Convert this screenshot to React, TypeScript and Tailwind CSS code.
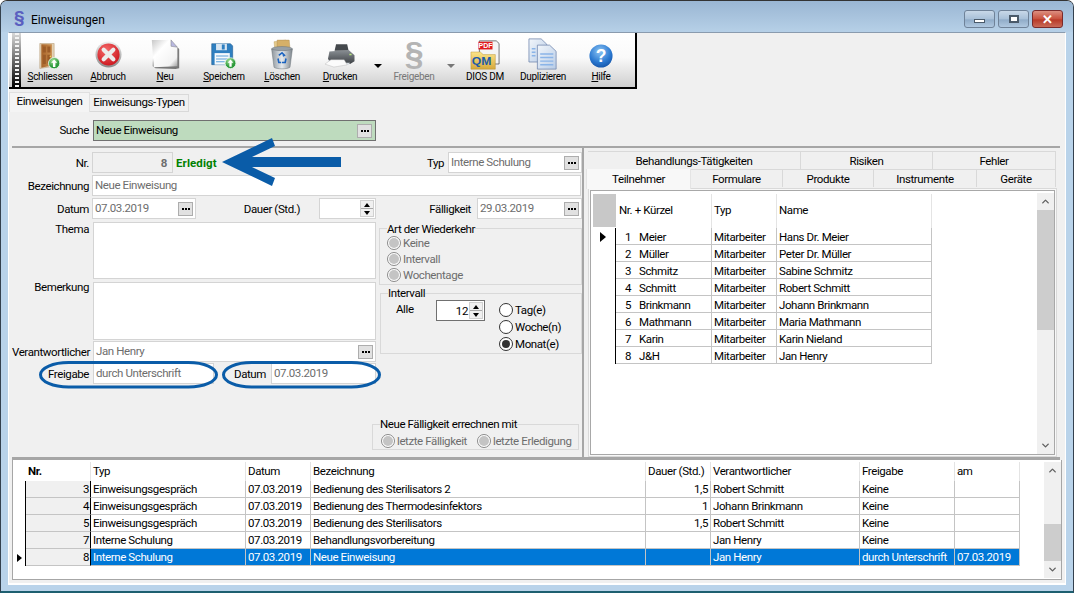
import React from "react";
import { ChevronUp, ChevronDown } from "lucide-react";

const Dots = () => (
  <span className="flex h-[14px] w-[15px] shrink-0 items-center justify-center gap-[1px] border border-[#adadad] bg-[#e1e1e1]">
    <i className="block h-[2px] w-[2px] bg-black" />
    <i className="block h-[2px] w-[2px] bg-black" />
    <i className="block h-[2px] w-[2px] bg-black" />
  </span>
);

const Field = ({ w, text, dots }: { w: string; text?: string; dots?: boolean }) => (
  <div className={`flex h-[21px] shrink-0 items-center justify-between border border-[#d4d4d4] bg-white pl-[2px] pr-[2px] text-[#6d6d6d] ${w}`}>
    <span className="whitespace-nowrap pb-[1px]">{text}</span>
    {dots && <Dots />}
  </div>
);

const Label = ({ children, w = "w-[78px]" }: { children: React.ReactNode; w?: string }) => (
  <span className={`shrink-0 whitespace-nowrap pr-[1px] text-right ${w}`}>{children}</span>
);

const Radio = ({ state = "off", label, w }: { state?: "off" | "on" | "dis"; label: string; w?: string }) => (
  <div className={`flex h-[16px] items-center gap-[2px] whitespace-nowrap ${w ?? ""}`}>
    {state === "dis" ? (
      <span className="flex h-[14px] w-[14px] shrink-0 items-center justify-center rounded-full border border-[#8a8a8a] bg-white">
        <i className="block h-[10px] w-[10px] rounded-full bg-[#c4c4c4]" />
      </span>
    ) : (
      <span className="flex h-[14px] w-[14px] shrink-0 items-center justify-center rounded-full border border-[#333] bg-white">
        {state === "on" && <i className="block h-[8px] w-[8px] rounded-full bg-[#333]" />}
      </span>
    )}
    <span className={state === "dis" ? "text-[#6d6d6d]" : "text-black"}>{label}</span>
  </div>
);

const Spin = () => (
  <span className="flex h-[17px] w-[14px] shrink-0 flex-col border border-[#d0d0d0] bg-[#f0f0f0]">
    <span className="flex flex-1 items-center justify-center border-b border-[#a8a8a8]">
      <i className="block h-0 w-0 border-x-[3px] border-b-[4px] border-x-transparent border-b-black" />
    </span>
    <span className="flex flex-1 items-center justify-center">
      <i className="block h-0 w-0 border-x-[3px] border-t-[4px] border-x-transparent border-t-black" />
    </span>
  </span>
);

const Scrollbar = ({ top, thumb, rest, h }: { top: string; thumb: string; rest: string; h: string }) => (
  <div className={`flex w-[17px] shrink-0 flex-col items-stretch bg-[#f0f0f0] ${h}`}>
    <span className="flex h-[17px] items-center justify-center">
      <ChevronUp size={11} strokeWidth={3} color="#606060" />
    </span>
    <span className={top} />
    <span className={`bg-[#cdcdcd] ${thumb}`} />
    <span className={rest} />
    <span className="flex h-[17px] items-center justify-center">
      <ChevronDown size={11} strokeWidth={3} color="#606060" />
    </span>
  </div>
);

const DoorIcon = () => (
  <svg width="22" height="28" viewBox="6 1 29 37">
    <defs>
      <linearGradient id="door" x1="0" x2="1"><stop offset="0" stopColor="#a8642a" /><stop offset="1" stopColor="#c98d4e" /></linearGradient>
      <radialGradient id="grn" cx=".4" cy=".3"><stop offset="0" stopColor="#a8e49a" /><stop offset="1" stopColor="#2d9a3c" /></radialGradient>
    </defs>
    <path d="M7 3h19v30l-19 3z" fill="#e3d2b5" stroke="#a88a60" strokeWidth=".6" />
    <path d="M9 4h14v28l-14 3z" fill="url(#door)" />
    <path d="M11 7h4v8h-4zM17 7h4v8h-4zM11 18h4v12h-4zM17 18h4v11h-4z" fill="#9c5c28" />
    <circle cx="21" cy="20" r="1" fill="#f0d050" />
    <circle cx="26" cy="29" r="7.5" fill="url(#grn)" stroke="#e8f5e8" strokeWidth="1.2" />
    <path d="M26 24l4 4.5h-2.4V34h-3.2v-5.5H22z" fill="#fff" />
  </svg>
);
const AbortIcon = () => (
  <svg className="mb-[2px]" width="27" height="27" viewBox="0 0 28 28">
    <defs>
      <radialGradient id="red" cx=".4" cy=".3" r=".8"><stop offset="0" stopColor="#f56a6a" /><stop offset="1" stopColor="#c80f18" /></radialGradient>
      <linearGradient id="ring" x1="0" y1="0" x2="0" y2="1"><stop offset="0" stopColor="#f0f0f0" /><stop offset="1" stopColor="#8a8a8a" /></linearGradient>
    </defs>
    <circle cx="14" cy="14" r="13.5" fill="url(#ring)" />
    <circle cx="14" cy="14" r="11.5" fill="url(#red)" />
    <path d="M9 9l10 10M19 9L9 19" stroke="#ececec" strokeWidth="4.4" strokeLinecap="round" />
  </svg>
);
const PaperIcon = () => (
  <svg width="31" height="31" viewBox="0 0 32 34">
    <defs><linearGradient id="pap" x1="0" y1="0" x2="1" y2="1"><stop offset="0" stopColor="#c8c8c8" /><stop offset=".35" stopColor="#fff" /><stop offset=".8" stopColor="#f2f2f2" /><stop offset="1" stopColor="#999" /></linearGradient></defs>
    <path d="M3 2h19l9 9v21l-4 1-22-1-3-2z" fill="#444" opacity=".7" />
    <path d="M1 1h21l7 8v21l-26 1z" fill="url(#pap)" />
    <path d="M22 1l7 8-7-1z" fill="#b8b8e0" stroke="#777" strokeWidth=".5" />
  </svg>
);
const FloppyIcon = () => (
  <svg className="mb-[1px]" width="26" height="26" viewBox="0 0 36 36">
    <defs><radialGradient id="grn2" cx=".4" cy=".3"><stop offset="0" stopColor="#a8e49a" /><stop offset="1" stopColor="#2d9a3c" /></radialGradient></defs>
    <path d="M1 1h26l3 3v26H1z" fill="#2f7fc0" stroke="#1d5a90" strokeWidth=".8" />
    <rect x="7" y="1" width="15" height="9" fill="#d8e6f2" />
    <rect x="15" y="2" width="4" height="7" fill="#2f7fc0" />
    <rect x="5" y="14" width="21" height="16" fill="#f6f9fc" />
    <path d="M7 18h17M7 22h17M7 26h12" stroke="#5aa0d8" strokeWidth="1.4" />
    <circle cx="27" cy="28" r="7.5" fill="url(#grn2)" stroke="#e8f5e8" strokeWidth="1.2" />
    <path d="M27 23l4 4.5h-2.4V33h-3.2v-5.5H23z" fill="#fff" />
  </svg>
);
const BinIcon = () => (
  <svg width="24" height="31" viewBox="0 0 30 38">
    <defs><linearGradient id="bin" x1="0" x2="1"><stop offset="0" stopColor="#8d959c" /><stop offset=".5" stopColor="#e6eaee" /><stop offset="1" stopColor="#7d858c" /></linearGradient></defs>
    <path d="M5 3l15-2 3 11H6z" fill="#e4c98a" stroke="#b59a5a" strokeWidth=".5" />
    <path d="M9 1h15l1 11H9z" fill="#d6b068" stroke="#a8864a" strokeWidth=".5" />
    <ellipse cx="15" cy="12" rx="13" ry="3" fill="#98a0a6" stroke="#6a7278" strokeWidth=".6" />
    <path d="M2 12l3 23c3 2.500 17 2.500 20 0l3-23c-5 3-21 3-26 0z" fill="url(#bin)" stroke="#6a7278" strokeWidth=".6" />
    <path d="M11 20l4-3 3 3-2 1M20 24l-1 5-4 0M10 24l1 5h3" fill="none" stroke="#1b63c0" strokeWidth="2" />
  </svg>
);
const PrinterIcon = () => (
  <svg className="mb-[1px]" width="31" height="26" viewBox="0 0 42 34">
    <defs><linearGradient id="pr" x1="0" y1="0" x2="0" y2="1"><stop offset="0" stopColor="#8a8f94" /><stop offset="1" stopColor="#3c4044" /></linearGradient></defs>
    <path d="M15 1h15l2 9H13z" fill="#44484c" />
    <path d="M6 11l26-2 8 7v8l-6 4-24 0-6-7z" fill="url(#pr)" />
    <path d="M4 22l6 4h24l-2 3H6z" fill="#d8dde2" />
    <path d="M0 28l8-6h18l4 7-18 3z" fill="#fbfbfb" stroke="#aaa" strokeWidth=".5" />
    <rect x="33" y="14" width="3" height="2" fill="#b4e47a" />
  </svg>
);
const QmIcon = () => (
  <svg width="30" height="30" viewBox="0 0 32 35" preserveAspectRatio="none">
    <defs><linearGradient id="fold" x1="0" y1="0" x2="0" y2="1"><stop offset="0" stopColor="#fbe48a" /><stop offset="1" stopColor="#d6a93c" /></linearGradient></defs>
    <path d="M10 1h18l3 3v24H10z" fill="#f4f4f4" stroke="#444" strokeWidth=".8" />
    <rect x="9" y="2" width="15" height="9" fill="#e01c1c" />
    <text x="16.500" y="9.500" textAnchor="middle" fontSize="7.500" fontWeight="700" letterSpacing="0" fill="#fff" fontFamily="Liberation Sans">PDF</text>
    <path d="M1 14h10l3 3h13v17H1z" fill="url(#fold)" stroke="#b48c30" strokeWidth=".5" />
    <text x="2" y="29" fontSize="13" fontWeight="700" letterSpacing="0" fill="#1c5aa8" fontFamily="Liberation Sans">QM</text>
  </svg>
);
const DupIcon = () => (
  <svg width="30" height="32" viewBox="0 0 32 36" preserveAspectRatio="none">
    <defs><linearGradient id="doc" x1="0" y1="0" x2="1" y2="1"><stop offset="0" stopColor="#f2f6fb" /><stop offset="1" stopColor="#b8cce6" /></linearGradient></defs>
    <path d="M1 1h13l6 6v20H1z" fill="url(#doc)" stroke="#6a80a8" strokeWidth=".8" />
    <path d="M10 8h13l7 7v20H10z" fill="url(#doc)" stroke="#6a80a8" strokeWidth=".8" />
    <path d="M13 18h14M13 22h14M13 26h14M13 30h14" stroke="#8ab4e8" strokeWidth="1.6" />
    <path d="M4 12h4M4 16h4M4 20h4" stroke="#8ab4e8" strokeWidth="1.6" />
  </svg>
);
const HelpIcon = () => (
  <svg className="mb-[2px]" width="24" height="24" viewBox="0 0 26 26">
    <defs><radialGradient id="hlp" cx=".45" cy=".3" r=".8"><stop offset="0" stopColor="#8cc4f4" /><stop offset=".6" stopColor="#2a78d0" /><stop offset="1" stopColor="#0f4a9c" /></radialGradient></defs>
    <circle cx="13" cy="13" r="12.500" fill="url(#hlp)" />
    <text x="13" y="20" textAnchor="middle" fontSize="19" fontWeight="700" letterSpacing="0" fill="#fff" fontFamily="Liberation Sans">?</text>
  </svg>
);

const Tool = ({ w, icon, label, dim }: { w: string; icon: React.ReactNode; label: React.ReactNode; dim?: boolean }) => (
  <div className={`flex h-[54px] shrink-0 flex-col items-center ${w}`}>
    <div className="flex h-[37px] items-end justify-center">{icon}</div>
    <span className={`whitespace-nowrap text-[10px] leading-[13px] tracking-[-0.3px] ${dim ? "text-[#777]" : "text-black"}`}>{label}</span>
  </div>
);

const Caret = ({ dim }: { dim?: boolean }) => (
  <div className="flex h-[54px] w-[13px] shrink-0 items-center justify-center pt-[11px]">
    <i className={`block h-0 w-0 border-x-[4px] border-t-[4px] border-x-transparent ${dim ? "border-t-[#777]" : "border-t-black"}`} />
  </div>
);

const WinBtn = ({ red, children }: { red?: boolean; children: React.ReactNode }) => (
  <div className={`flex h-[18px] w-[31px] items-center justify-center rounded-[3px] border ${red ? "border-[#7a2a2a] bg-[linear-gradient(#dc8f80,#c8503c_50%,#b83a28_55%,#c86a58)]" : "border-[#6f8298] bg-[linear-gradient(#c8d8e8,#a8c0d8_50%,#90acc8_55%,#b0c8e0)]"}`}>
    {children}
  </div>
);

const teil = [
  ["1", "Meier", "Hans Dr. Meier"],
  ["2", "Müller", "Peter Dr. Müller"],
  ["3", "Schmitz", "Sabine Schmitz"],
  ["4", "Schmitt", "Robert Schmitt"],
  ["5", "Brinkmann", "Johann Brinkmann"],
  ["6", "Mathmann", "Maria Mathmann"],
  ["7", "Karin", "Karin Nieland"],
  ["8", "J&H", "Jan Henry"],
];

const rows = [
  ["3", "Einweisungsgespräch", "07.03.2019", "Bedienung des Sterilisators 2", "1,5", "Robert Schmitt", "Keine", ""],
  ["4", "Einweisungsgespräch", "07.03.2019", "Bedienung des Thermodesinfektors", "1", "Johann Brinkmann", "Keine", ""],
  ["5", "Einweisungsgespräch", "07.03.2019", "Bedienung des Sterilisators", "1,5", "Robert Schmitt", "Keine", ""],
  ["7", "Interne Schulung", "07.03.2019", "Behandlungsvorbereitung", "", "Jan Henry", "Keine", ""],
  ["8", "Interne Schulung", "07.03.2019", "Neue Einweisung", "", "Jan Henry", "durch Unterschrift", "07.03.2019"],
];

const cols = ["w-[155px]", "w-[65px]", "w-[335px]", "w-[65px]", "w-[149px]", "w-[95px]", "w-[65px]"];

const TopTab = ({ w, children }: { w: string; children: React.ReactNode }) => (
  <div className={`flex h-[18px] items-center justify-center whitespace-nowrap border-r border-t border-[#d9d9d9] bg-[#f0f0f0] ${w}`}>{children}</div>
);

export default function App() {
  return (
    <div className="relative h-[593px] w-[1074px] overflow-hidden rounded-t-[7px] border-x border-t border-b-2 border-x-[#34414e] border-t-[#333] border-b-[#1d5f70] bg-[#b9d3ea] px-[7px] font-['Roboto',sans-serif] text-[11.5px] leading-[14px] tracking-[-0.4px] text-black">
      {/* Title bar */}
      <div className="-mx-[7px] flex h-[31px] items-start bg-[linear-gradient(#9ab6d3,#b6d0e7)] px-[7px]">
        <span className="ml-[6px] mt-[9px] w-[16px] text-[17px] font-bold text-[#5a5fc0]">§</span>
        <span className="ml-[1px] mt-[12px] text-[12px] tracking-normal">Einweisungen</span>
        <div className="ml-auto mr-[3px] mt-[9px] flex gap-[3px]">
          <WinBtn><i className="mt-[3px] block h-[4px] w-[11px] border border-[#4a5a6a] bg-white" /></WinBtn>
          <WinBtn><i className="block h-[8px] w-[10px] border-2 border-[#4a5a6a] bg-white" /></WinBtn>
          <WinBtn red><span className="text-[13px] font-bold leading-none text-white">✕</span></WinBtn>
        </div>
      </div>

      {/* Client area */}
      <div className="h-[553px] border-x border-t border-b-2 border-x-white border-b-white border-t-[#8a9bae] bg-[#f0f0f0]">
        {/* Toolbar */}
        <div className="flex h-[56px] w-[628px] items-stretch border-b-2 border-r-2 border-b-black border-r-black bg-[linear-gradient(#ffffff,#fafafa_45%,#cfcfcf)]">
          <div className="ml-[3px] flex h-full w-[9px] justify-center bg-[linear-gradient(#d8d8d8,#000)]">
            <div className="h-full w-[4px] bg-[repeating-linear-gradient(#f4f4f4_0,#f4f4f4_2px,transparent_2px,transparent_4px)]" />
          </div>
          <div className="flex">
            <Tool w="w-[58px]" icon={<DoorIcon />} label={<><u>S</u>chliessen</>} />
            <Tool w="w-[58px]" icon={<AbortIcon />} label={<><u>A</u>bbruch</>} />
            <Tool w="w-[56px]" icon={<PaperIcon />} label={<><u>N</u>eu</>} />
            <Tool w="w-[62px]" icon={<FloppyIcon />} label={<><u>S</u>peichern</>} />
            <Tool w="w-[54px]" icon={<BinIcon />} label={<><u>L</u>öschen</>} />
            <Tool w="w-[62px]" icon={<PrinterIcon />} label={<><u>D</u>rucken</>} />
            <Caret />
            <Tool w="w-[60px]" dim icon={<span className="font-['Liberation_Sans',sans-serif] text-[34px] font-bold leading-[34px] text-[#b4b4b4]">§</span>} label="Freigeben" />
            <Caret dim />
            <Tool w="w-[56px]" icon={<QmIcon />} label="DIOS DM" />
            <Tool w="w-[60px]" icon={<DupIcon />} label="Duplizieren" />
            <Tool w="w-[56px]" icon={<HelpIcon />} label={<><u>H</u>ilfe</>} />
          </div>
        </div>

        {/* Page tabs */}
        <div className="mt-[3px] flex h-[20px] items-end whitespace-nowrap">
          <div className="flex h-[20px] w-[81px] items-center justify-center border-x border-t border-[#e0e0e0] bg-[#f4f4f4] pb-[4px]">Einweisungen</div>
          <div className="flex h-[18px] w-[99px] items-center justify-center border-r border-t border-b border-[#d9d9d9] bg-[#f0f0f0] pb-[2px]">Einweisungs-Typen</div>
        </div>

        {/* Search */}
        <div className="ml-[3px] mt-[3px] mr-[5px] flex h-[33px] items-start border-b-2 border-[#a6a6a6] pt-[5px]">
          <span className="w-[78px] shrink-0 pr-[1px] pt-[3px] text-right">Suche</span>
          <div className="ml-[3px] flex h-[21px] w-[283px] items-center justify-between border border-[#707070] bg-[#bedbbe] pl-[2px] pr-[3px]">
            <span className="pb-[1px]">Neue Einweisung</span>
            <Dots />
          </div>
        </div>

        {/* Main */}
        <div className="ml-[3px] mr-[5px] flex h-[312px] border-b-[3px] border-[#a6a6a6]">
          {/* Left form */}
          <div className="w-[572px] shrink-0 border-r-2 border-[#a6a6a6] pt-[4px]">
            <div className="flex h-[21px] items-center">
              <Label>Nr.</Label>
              <div className="ml-[2px] flex h-[21px] w-[81px] items-center justify-end border border-[#d4d4d4] pr-[5px] font-bold text-[#6d6d6d]">8</div>
              <span className="ml-[3px] w-[251px] shrink-0 font-bold tracking-[0.1px] text-[#008000]">Erledigt</span>
              <span className="w-[16px] text-right">Typ</span>
              <span className="ml-[5px]"><Field w="w-[134px]" text="Interne Schulung" dots /></span>
            </div>
            <div className="mt-[2px] flex items-center">
              <Label>Bezeichnung</Label>
              <span className="ml-[2px]"><Field w="w-[489px]" text="Neue Einweisung" /></span>
            </div>
            <div className="mt-[2px] flex items-center">
              <Label>Datum</Label>
              <span className="ml-[2px]"><Field w="w-[104px]" text="07.03.2019" dots /></span>
              <span className="w-[104px] text-right">Dauer (Std.)</span>
              <div className="ml-[19px] flex h-[21px] w-[57px] items-center justify-end border border-[#d4d4d4] bg-white pr-[1px]"><Spin /></div>
              <span className="w-[95px] text-right">Fälligkeit</span>
              <span className="ml-[6px]"><Field w="w-[105px]" text="29.03.2019" dots /></span>
            </div>

            <div className="mt-[3px] flex">
              <div className="w-[367px] shrink-0">
                <div className="flex items-start">
                  <Label>Thema</Label>
                  <div className="ml-[3px] h-[57px] w-[283px] border border-[#d4d4d4] bg-white" />
                </div>
                <div className="mt-[3px] flex items-start">
                  <span className="-mt-[2px] w-[78px] shrink-0 whitespace-nowrap pr-[1px] text-right">Bemerkung</span>
                  <div className="ml-[3px] h-[58px] w-[283px] border border-[#d4d4d4] bg-white" />
                </div>
                <div className="mt-[1px] flex items-center">
                  <Label>Verantwortlicher</Label>
                  <span className="ml-[3px]"><Field w="w-[283px]" text="Jan Henry" dots /></span>
                </div>
                <div className="mt-[1px] flex items-center">
                  <Label>Freigabe</Label>
                  <span className="ml-[3px]"><Field w="w-[121px]" text="durch Unterschrift" /></span>
                  <span className="w-[52px] text-right">Datum</span>
                  <span className="ml-[5px]"><Field w="w-[105px]" text="07.03.2019" /></span>
                </div>
              </div>
              <div className="w-[203px] shrink-0">
                <fieldset className="h-[63px] border border-[#d9d9d9] pl-[7px]">
                  <legend className="h-[13px] whitespace-nowrap">Art der Wiederkehr</legend>
                  <Radio state="dis" label="Keine" />
                  <Radio state="dis" label="Intervall" />
                  <Radio state="dis" label="Wochentage" />
                </fieldset>
                <fieldset className="ml-[1px] mt-[1px] h-[68px] w-[202px] border border-[#d9d9d9]">
                  <legend className="ml-[7px] h-[14px]">Intervall</legend>
                  <div className="flex">
                    <span className="ml-[15px] mt-[2px] w-[23px] shrink-0">Alle</span>
                    <div className="ml-[17px] flex h-[21px] w-[49px] shrink-0 items-center justify-end border border-[#707070] bg-white pr-[1px]">
                      <span className="pr-[1px]">12</span><Spin />
                    </div>
                    <div className="ml-[14px] mt-[2px] flex flex-col gap-[1px]">
                      <Radio label="Tag(e)" />
                      <Radio label="Woche(n)" />
                      <Radio state="on" label="Monat(e)" />
                    </div>
                  </div>
                </fieldset>
                <fieldset className="-ml-[7px] mt-[63px] h-[33px] w-[207px] border border-[#d9d9d9] pl-[8px]">
                  <legend className="-ml-[1px] h-[14px] whitespace-nowrap">Neue Fälligkeit errechnen mit</legend>
                  <div className="mt-[2px] flex">
                    <Radio state="dis" label="letzte Fälligkeit" w="w-[96px]" />
                    <Radio state="dis" label="letzte Erledigung" />
                  </div>
                </fieldset>
              </div>
            </div>
          </div>

          {/* Right tabs */}
          <div className="flex-1 pl-[2px] pt-[3px]">
            <div className="ml-[2px] flex">
              <TopTab w="w-[213px]">Behandlungs-Tätigkeiten</TopTab>
              <TopTab w="w-[132px]">Risiken</TopTab>
              <TopTab w="w-[123px]">Fehler</TopTab>
            </div>
            <div className="flex h-[19px] items-start">
              <div className="z-10 flex h-[20px] w-[105px] items-center justify-center border-x border-[#e4e4e4] bg-[#f8f8f8]">Teilnehmer</div>
              <TopTab w="w-[92px]">Formulare</TopTab>
              <TopTab w="w-[91px]">Produkte</TopTab>
              <TopTab w="w-[103px]">Instrumente</TopTab>
              <TopTab w="w-[79px]">Geräte</TopTab>
            </div>
            <div className="ml-[2px] h-[269px] w-[469px] border border-[#d9d9d9] bg-[#f8f8f8] p-[1px]">
              <div className="flex h-full border border-[#a8a8a8] bg-white pl-[2px] pt-[2px]">
                <div className="w-[442px] pt-[1px]">
                  <div className="flex h-[34px] items-stretch whitespace-nowrap">
                    <div className="mb-[1px] w-[23px] bg-[#c8c8c8]" />
                    <div className="flex w-[96px] items-center border-r border-[#e4e4e4] pb-[2px] pl-[3px]">Nr. + Kürzel</div>
                    <div className="flex w-[65px] items-center border-r border-[#e4e4e4] pb-[2px] pl-[2px]">Typ</div>
                    <div className="flex w-[155px] items-center border-r border-[#e4e4e4] pb-[2px] pl-[2px]">Name</div>
                  </div>
                  {teil.map((r, i) => (
                    <div key={r[0]} className="flex h-[17px] whitespace-nowrap">
                      <div className="flex w-[23px] items-center justify-center border-r border-black pl-[1px] pr-[4px]">
                        {i === 0 && <i className="block h-0 w-0 border-y-[5px] border-l-[6px] border-y-transparent border-l-black" />}
                      </div>
                      <div className="flex w-[96px] items-center border-b border-r border-[#c4c4c4] pt-[1px]">
                        <span className="w-[15px] text-right">{r[0]}</span>
                        <span className="ml-[8px]">{r[1]}</span>
                      </div>
                      <div className="flex w-[65px] items-center border-b border-r border-[#c4c4c4] pl-[2px] pt-[1px]">Mitarbeiter</div>
                      <div className="flex w-[155px] items-center border-b border-r border-[#c4c4c4] pl-[2px] pt-[1px]">{r[2]}</div>
                    </div>
                  ))}
                </div>
                <div className="ml-[3px]">
                  <Scrollbar h="h-[261px]" top="h-0" thumb="h-[120px]" rest="flex-1" />
                </div>
              </div>
            </div>
          </div>
        </div>

        {/* Bottom grid */}
        <div className="ml-[3px] mr-[3px] flex h-[120px] border border-t-0 border-[#a6a6a6] bg-white pt-[2px]">
          <div className="w-[1031px]">
            <div className="flex h-[19px] whitespace-nowrap">
              <div className="w-[13px]" />
              <div className="flex w-[65px] items-center border-r border-[#e4e4e4] pb-[2px] pl-[2px] font-bold">Nr.</div>
              {["Typ", "Datum", "Bezeichnung", "Dauer (Std.)", "Verantwortlicher", "Freigabe", "am"].map((h, i) => (
                <div key={h} className={`flex items-center border-r border-[#e4e4e4] pb-[2px] pl-[2px] ${cols[i]}`}>{h}</div>
              ))}
            </div>
            {rows.map((r, ri) => {
              const sel = ri === 4;
              return (
                <div key={r[0]} className="flex h-[17px]">
                  <div className="flex w-[13px] items-center justify-end border-r border-black pr-[3px]">
                    {sel && <i className="block h-0 w-0 border-y-[4px] border-l-[5px] border-y-transparent border-l-black" />}
                  </div>
                  <div className="flex w-[65px] items-center justify-end border-b border-r border-b-[#c4c4c4] border-r-black bg-[#f0f0f0] pr-[1px]">{r[0]}</div>
                  <div className={`flex ${sel ? "bg-[#0078d7] text-white" : ""}`}>
                    {r.slice(1).map((c, i) => (
                      <div key={i} className={`flex items-center overflow-hidden whitespace-nowrap border-b border-r border-[#c4c4c4] px-[2px] ${cols[i]} ${i === 3 ? "justify-end" : ""}`}>{c}</div>
                    ))}
                  </div>
                </div>
              );
            })}
          </div>
          <Scrollbar h="h-[116px]" top="h-[45px]" thumb="h-[37px]" rest="flex-1" />
        </div>
      </div>

      {/* Blue hand-drawn annotations over the form */}
      <svg className="absolute -left-[1px] -top-[1px]" width="1074" height="593" fill="none">
        <polygon points="222,162 272,138 275,146 252,157 341,157 341,167 252,167 275,178 272,186" fill="#0a5ca8" />
        <rect x="40.500" y="362.500" width="176" height="24.500" rx="28" ry="12.250" stroke="#0a5ca8" strokeWidth="3" />
        <rect x="223.500" y="362.500" width="156" height="24.500" rx="28" ry="12.250" stroke="#0a5ca8" strokeWidth="3" />
      </svg>
    </div>
  );
}
